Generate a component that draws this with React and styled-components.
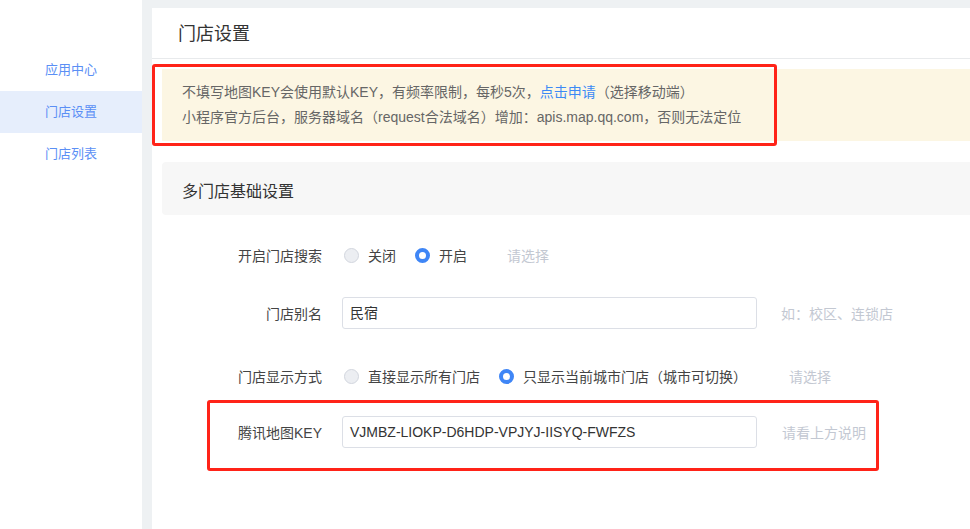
import React from 'react';
import styled, { createGlobalStyle } from 'styled-components';

const GlobalStyle = createGlobalStyle`
  html, body {
    margin: 0;
    padding: 0;
    background: #eef1f3;
    font-family: "Liberation Sans", "Noto Sans CJK SC", sans-serif;
  }
  * {
    box-sizing: border-box;
  }
`;

const Page = styled.div`
  display: flex;
  width: 970px;
  height: 529px;
  overflow: hidden;
  background: #eef1f3;
`;

const Sidebar = styled.div`
  width: 142px;
  flex-shrink: 0;
  background: #fff;
  padding-top: 49px;
`;

const NavItem = styled.div`
  height: 42px;
  line-height: 42px;
  padding-left: 45px;
  font-size: 13px;
  color: #5b8ff5;
  background: ${props => (props.active ? '#e6eefc' : 'transparent')};
`;

const Main = styled.div`
  flex: 1;
  padding: 8px 0 0 10px;
`;

const Panel = styled.div`
  background: #fff;
  height: 100%;
`;

const PanelHeader = styled.div`
  height: 51px;
  line-height: 53px;
  padding-left: 26px;
  font-size: 18px;
  color: #333;
  border-bottom: 1px solid #e8eaec;
`;

const Content = styled.div`
  padding: 10px 0 0 10px;
`;

const Notice = styled.div`
  position: relative;
  background: #fcf6e3;
  padding: 11px 20px 11px 20px;
  font-size: 14px;
  line-height: 25px;
  color: #666;
`;

const Link = styled.span`
  color: #3d8af5;
`;

const Highlight = styled.div`
  position: absolute;
  left: ${props => props.left}px;
  top: ${props => props.top}px;
  width: ${props => props.width}px;
  height: ${props => props.height}px;
  border: 3px solid #ff2318;
  border-radius: 3px;
  pointer-events: none;
`;

const SectionTitle = styled.div`
  margin-top: 21px;
  height: 53px;
  line-height: 60px;
  padding-left: 20px;
  background: #f7f7f7;
  border-radius: 4px 0 0 4px;
  font-size: 16px;
  color: #333;
`;

const Form = styled.div`
  display: flex;
  flex-direction: column;
`;

const Row = styled.div`
  position: relative;
  display: flex;
  align-items: center;
  height: 32px;
  margin-top: ${props => props.top}px;
`;

const Label = styled.div`
  width: 180px;
  padding-right: 20px;
  text-align: right;
  font-size: 14px;
  color: #444;
`;

const RadioGroup = styled.div`
  display: flex;
  align-items: center;
  gap: 19px;
  padding-left: 2px;
`;

const RadioOption = styled.label`
  display: flex;
  align-items: center;
  gap: 9px;
  font-size: 14px;
  color: #444;
`;

const RadioDot = styled.span`
  width: 15px;
  height: 15px;
  border-radius: 50%;
  box-sizing: border-box;
  background: ${props => (props.checked ? '#fff' : '#eceef2')};
  border: ${props => (props.checked ? '4px solid #3f86f6' : '1px solid #d2d6de')};
`;

const Input = styled.div`
  width: 415px;
  height: 32px;
  line-height: 30px;
  padding-left: 7px;
  border: 1px solid #dcdfe6;
  border-radius: 3px;
  font-size: 14px;
  color: #333;
`;

const Hint = styled.div`
  margin-left: ${props => props.gap}px;
  font-size: 14px;
  color: #c3c8d2;
`;

const Radio = ({ checked, children }) => (
  <RadioOption>
    <RadioDot checked={checked} />
    {children}
  </RadioOption>
);

export default function App() {
  return (
    <>
      <GlobalStyle />
      <Page>
        <Sidebar>
          <NavItem>应用中心</NavItem>
          <NavItem active>门店设置</NavItem>
          <NavItem>门店列表</NavItem>
        </Sidebar>
        <Main>
          <Panel>
            <PanelHeader>门店设置</PanelHeader>
            <Content>
              <Notice>
                <div>
                  不填写地图KEY会使用默认KEY，有频率限制，每秒5次，<Link>点击申请</Link>（选择移动端）
                </div>
                <div>小程序官方后台，服务器域名（request合法域名）增加：apis.map.qq.com，否则无法定位</div>
                <Highlight left={-10} top={-5} width={625} height={82} />
              </Notice>
              <SectionTitle>多门店基础设置</SectionTitle>
              <Form>
                <Row top={24}>
                  <Label>开启门店搜索</Label>
                  <RadioGroup>
                    <Radio>关闭</Radio>
                    <Radio checked>开启</Radio>
                  </RadioGroup>
                  <Hint gap={40}>请选择</Hint>
                </Row>
                <Row top={26}>
                  <Label>门店别名</Label>
                  <Input>民宿</Input>
                  <Hint gap={24}>如：校区、连锁店</Hint>
                </Row>
                <Row top={31}>
                  <Label>门店显示方式</Label>
                  <RadioGroup>
                    <Radio>直接显示所有门店</Radio>
                    <Radio checked>只显示当前城市门店（城市可切换）</Radio>
                  </RadioGroup>
                  <Hint gap={42}>请选择</Hint>
                </Row>
                <Row top={24}>
                  <Label>腾讯地图KEY</Label>
                  <Input>VJMBZ-LIOKP-D6HDP-VPJYJ-IISYQ-FWFZS</Input>
                  <Hint gap={25}>请看上方说明</Hint>
                  <Highlight left={45} top={-16} width={672} height={71} />
                </Row>
              </Form>
            </Content>
          </Panel>
        </Main>
      </Page>
    </>
  );
}
